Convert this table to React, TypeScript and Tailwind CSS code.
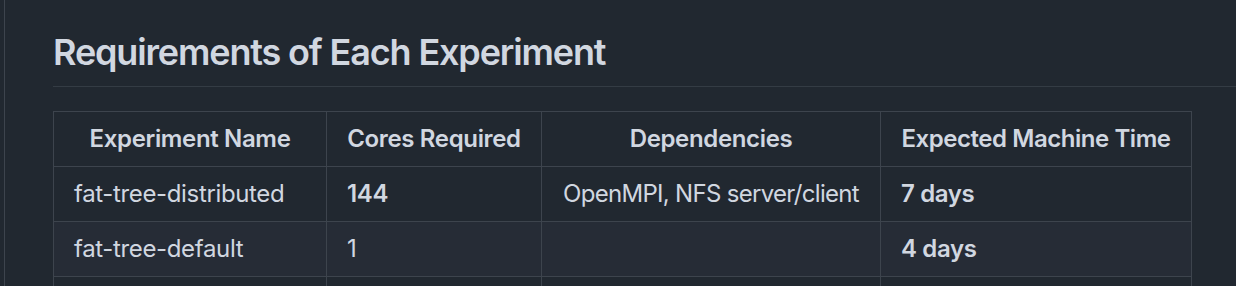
const rows = [
	{ name: 'fat-tree-distributed', cores: '144', deps: 'OpenMPI, NFS server/client', time: '7 days', even: false },
	{ name: 'fat-tree-default', cores: '1', deps: '', time: '4 days', even: true },
	{ name: 'fat-tree-small', cores: '1', deps: '', time: '2 hours', even: false },
];

export default function App() {
	return (
		<div className="h-[286px] w-[1236px] overflow-hidden bg-[#212830] text-[#d1d7e0] font-['Inter',sans-serif]">
			<div className="ml-1 h-full border-l border-[#3d444d] pl-12 pt-[30px]">
				<h2 className="border-b border-[#3d444db3] pb-[11px] text-[36px] leading-[45px] font-semibold tracking-[-1.15px]">
					Requirements of Each Experiment
				</h2>

				<table className="mt-6 w-[1139px] table-fixed border-collapse whitespace-nowrap text-[24px] leading-9 tracking-[-0.35px]">
					<colgroup>
						<col className="w-[273px]" />
						<col className="w-[215px]" />
						<col className="w-[339px]" />
						<col className="w-[311px]" />
					</colgroup>
					<thead>
						<tr>
							<th className="border border-[#3d444d] px-5 py-[9px] text-center font-semibold">Experiment Name</th>
							<th className="border border-[#3d444d] px-5 py-[9px] text-center font-semibold">Cores Required</th>
							<th className="border border-[#3d444d] px-5 py-[9px] text-center font-semibold">Dependencies</th>
							<th className="border border-[#3d444d] px-5 py-[9px] text-center font-semibold tracking-[-0.45px]">Expected Machine Time</th>
						</tr>
					</thead>
					<tbody>
						{rows.map((r) => (
							<tr key={r.name} className={r.even ? 'bg-[#262c36]' : ''}>
								<td className="border border-[#3d444d] px-5 py-[9px] text-left">{r.name}</td>
								<td className="border border-[#3d444d] px-5 py-[9px] text-left font-semibold">{r.cores === '1' ? <span className="font-normal">1</span> : r.cores}</td>
								<td className="border border-[#3d444d] px-5 py-[9px] text-center tracking-[-0.7px]">{r.deps}</td>
								<td className="border border-[#3d444d] px-5 py-[9px] text-left font-semibold">{r.time}</td>
							</tr>
						))}
					</tbody>
				</table>
			</div>
		</div>
	);
}
